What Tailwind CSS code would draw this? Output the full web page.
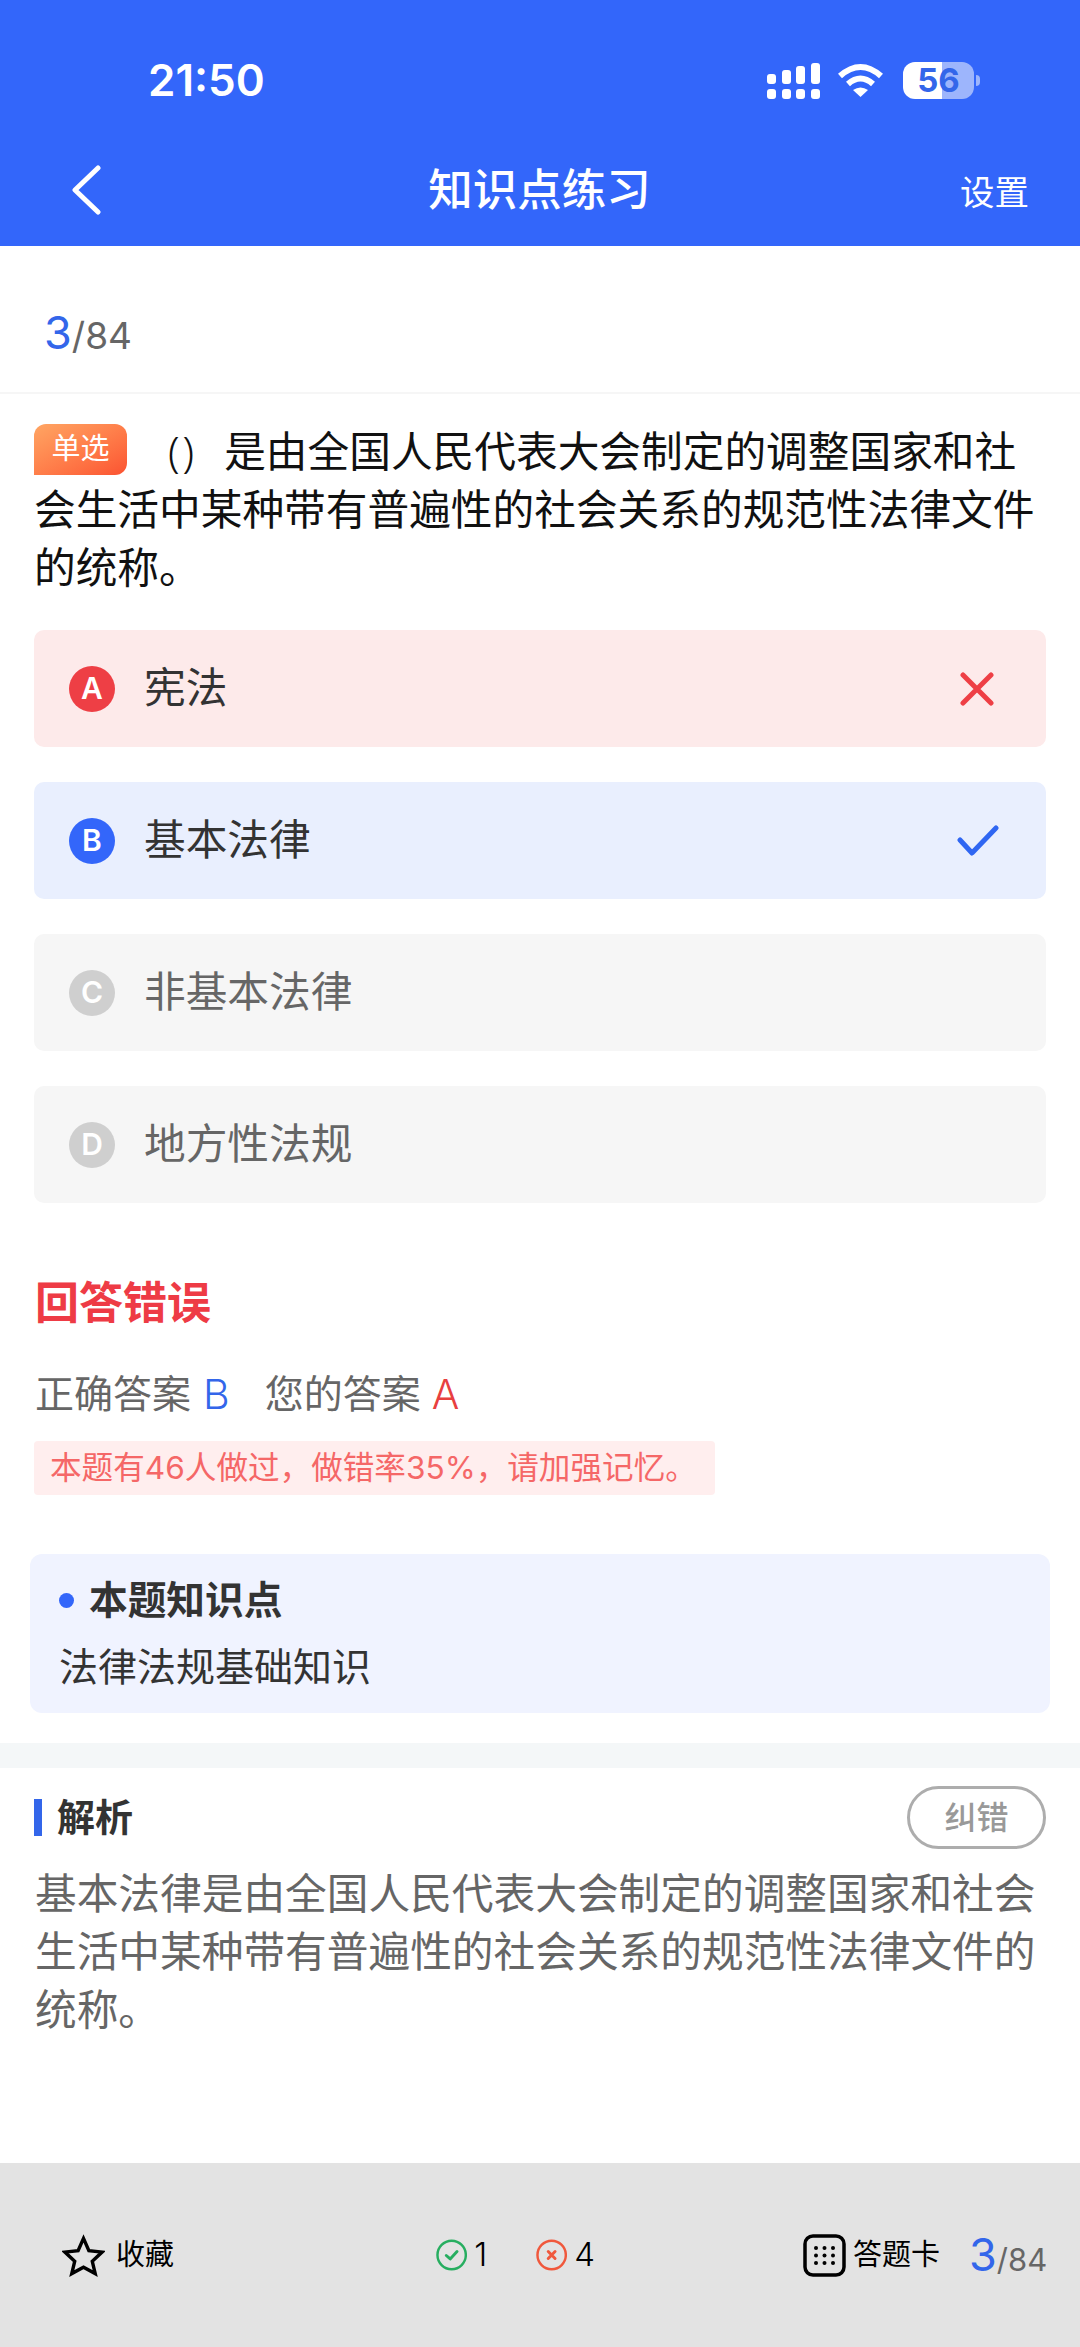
<!DOCTYPE html>
<html lang="zh-CN">
<head>
    <meta charset="UTF-8">
    <title>知识点练习</title>
    <script src="https://cdn.jsdelivr.net/npm/@tailwindcss/browser@4"></script>
</head>
<body class="m-0 bg-white font-['Inter','Noto_Sans_CJK_SC',sans-serif]">
<div class="flex flex-col w-[1080px] h-[2347px] overflow-hidden">

    <!-- header -->
    <div class="h-[246px] bg-[#3366fa] text-white">
        <div class="flex items-center h-[160px] pl-[148px] pr-[100px]">
            <span class="text-[44px] font-semibold leading-none">21:50</span>
            <div class="flex items-center ml-auto">
                <svg width="54" height="37" viewBox="0 0 54 37" fill="#fff">
                    <rect x="0" y="12" width="9" height="10" rx="3"/>
                    <rect x="15" y="8" width="9" height="14" rx="3"/>
                    <rect x="29" y="4" width="9" height="18" rx="3"/>
                    <rect x="44" y="1" width="9" height="21" rx="3"/>
                    <rect x="0" y="27" width="9" height="10" rx="3"/>
                    <rect x="15" y="27" width="9" height="10" rx="3"/>
                    <rect x="29" y="27" width="9" height="10" rx="3"/>
                    <rect x="44" y="27" width="9" height="10" rx="3"/>
                </svg>
                <svg class="ml-[16px]" width="47" height="34" viewBox="0 0 47 34" fill="none" stroke="#fff" stroke-width="6">
                    <path d="M3 13Q23.500 -5 44 13"/>
                    <path d="M11 21Q23.500 10 36 21"/>
                    <path d="M16 27Q23.500 22 31 27L23.500 34Z" fill="#fff" stroke="none"/>
                </svg>
                <div class="flex items-center justify-center ml-[19px] w-[71px] h-[37px] rounded-[12px] bg-[linear-gradient(90deg,#fff_55%,#9db5fc_55%)] text-[33px] font-bold leading-none text-[#3366ea]">56</div>
                <div class="ml-[2px] w-[4px] h-[11px] rounded-r-full bg-[#9db5fc]"></div>
            </div>
        </div>
        <div class="flex items-center h-[60px] pl-[70px] pr-[51px]">
            <div class="flex-1">
                <svg width="32" height="50" viewBox="0 0 32 50" fill="none" stroke="#fff" stroke-width="5" stroke-linecap="round" stroke-linejoin="round">
                    <path d="M28 3L5 25L28 47"/>
                </svg>
            </div>
            <span class="mr-[20px] text-[44.500px] font-medium leading-none">知识点练习</span>
            <div class="flex-1 text-right text-[34.500px] leading-none pt-[6px]">设置</div>
        </div>
    </div>

    <!-- progress -->
    <div class="flex items-baseline h-[148px] pl-[44px] pt-[62px] border-b-2 border-[#f6f6f6] text-[#666] text-[37px] leading-[50px]">
        <span class="text-[#3366ea] text-[45px]">3</span><span>/84</span>
    </div>

    <!-- question -->
    <div class="px-[34px] pt-[28px] text-[41.700px] leading-[58px] text-[#111]">
        <span class="inline-block w-[93px] h-[51px] mt-[2px] mr-[41px] align-top rounded-t-[12px] rounded-br-[12px] bg-linear-to-br from-[#ffa563] to-[#fb5231] text-white text-[29px] leading-[50px] text-center">单选</span><span class="font-['Noto_Sans',sans-serif] font-light tracking-[3px]">()</span><span class="ml-[27px]">是由全国人民代表大会制定的调整国家和社</span>会生活中某种带有普遍性的社会关系的规范性法律文件的统称。
    </div>

    <!-- options -->
    <div class="flex flex-col gap-[35px] mx-[34px] mt-[33px]">
        <div class="flex items-center h-[117px] pl-[35px] pr-[52px] rounded-[10px] bg-[#fdeaea] text-[#333] text-[41.700px]">
            <span class="flex items-center justify-center w-[46px] h-[46px] mr-[29px] rounded-full bg-[#ee3f45] text-white text-[30px] font-semibold">A</span>
            <span>宪法</span>
            <svg class="ml-auto" width="34" height="34" viewBox="0 0 34 34" fill="none" stroke="#ee3f45" stroke-width="5" stroke-linecap="round">
                <path d="M3 3L31 31M31 3L3 31"/>
            </svg>
        </div>
        <div class="flex items-center h-[117px] pl-[35px] pr-[47px] rounded-[10px] bg-[#e9effe] text-[#333] text-[41.700px]">
            <span class="flex items-center justify-center w-[46px] h-[46px] mr-[29px] rounded-full bg-[#3366fa] text-white text-[30px] font-semibold">B</span>
            <span>基本法律</span>
            <svg class="ml-auto" width="42" height="31" viewBox="0 0 42 31" fill="none" stroke="#2f66f2" stroke-width="5" stroke-linecap="round" stroke-linejoin="round">
                <path d="M3 15L15 28L39 3"/>
            </svg>
        </div>
        <div class="flex items-center h-[117px] pl-[35px] pr-[47px] rounded-[10px] bg-[#f6f6f6] text-[#666] text-[41.700px]">
            <span class="flex items-center justify-center w-[46px] h-[46px] mr-[29px] rounded-full bg-[#cfcfcf] text-white text-[30px] font-semibold">C</span>
            <span>非基本法律</span>
        </div>
        <div class="flex items-center h-[117px] pl-[35px] pr-[47px] rounded-[10px] bg-[#f6f6f6] text-[#666] text-[41.700px]">
            <span class="flex items-center justify-center w-[46px] h-[46px] mr-[29px] rounded-full bg-[#cfcfcf] text-white text-[30px] font-semibold">D</span>
            <span>地方性法规</span>
        </div>
    </div>

    <!-- result -->
    <div class="mx-[35px] mt-[70px] h-[60px] text-[44px] leading-[60px] font-bold text-[#ee3b45]">回答错误</div>
    <div class="flex mx-[35px] mt-[36px] h-[50px] text-[39px] leading-[50px] text-[#666]">
        <span>正确答案</span><span class="ml-[12px] text-[41px] font-light text-[#3366ea]">B</span>
        <span class="ml-[35px]">您的答案</span><span class="ml-[11px] text-[41px] font-light text-[#e8403f]">A</span>
    </div>
    <div class="w-[681px] h-[54px] mx-[34px] mt-[22px] pl-[16px] rounded-[4px] bg-[#ffeeee] text-[31.600px] leading-[54px] text-[#f56767]">本题有46人做过，做错率35%，请加强记忆。</div>

    <!-- knowledge point -->
    <div class="h-[159px] mx-[30px] mt-[59px] pl-[29px] pt-[21px] rounded-[12px] bg-[#f0f3ff] text-[#333]">
        <div class="flex items-center h-[50px] text-[38.700px] font-bold">
            <span class="w-[15px] h-[15px] mr-[15px] rounded-full bg-[#3366fa]"></span>本题知识点
        </div>
        <div class="mt-[17px] h-[50px] text-[39px] leading-[50px]">法律法规基础知识</div>
    </div>

    <div class="h-[25px] mt-[30px] bg-[#f4f7f8]"></div>

    <!-- analysis -->
    <div class="flex items-center h-[63px] mx-[34px] mt-[18px]">
        <span class="w-[8px] h-[37px] mr-[15px] bg-[#3366ea]"></span>
        <span class="text-[38px] font-bold text-[#333]">解析</span>
        <span class="flex items-center justify-center ml-auto w-[139px] h-[63px] rounded-full border-[3px] border-[#adadad] text-[32px] font-medium text-[#999]">纠错</span>
    </div>
    <div class="mx-[35px] mt-[16px] text-[41.700px] leading-[58px] text-[#666]">基本法律是由全国人民代表大会制定的调整国家和社会生活中某种带有普遍性的社会关系的规范性法律文件的统称。</div>

    <!-- bottom bar -->
    <div class="flex items-center h-[184px] mt-auto pl-[62px] bg-[#e3e3e3] text-black">
        <div class="flex items-center w-[112px]">
            <svg width="44" height="43" viewBox="0 0 44 43" fill="none" stroke="#000" stroke-width="3.500">
                <path d="M22 4L27.500 16.500L41 18L31 27.500L34 40L22 33.500L10 40L13 27.500L3 18L16.500 16.500Z"/>
            </svg>
            <span class="ml-[11px] text-[29px] whitespace-nowrap">收藏</span>
        </div>
        <div class="flex items-center ml-[262px] w-[159px]">
            <svg width="32" height="32" viewBox="0 0 32 32" fill="none" stroke="#27ae60" stroke-width="2.500" stroke-linecap="round" stroke-linejoin="round">
                <circle cx="16" cy="16" r="14.500"/>
                <path d="M10.500 16.500L14.500 20L21.500 12.500" stroke-width="3"/>
            </svg>
            <span class="ml-[7px] w-[63px] text-[33px] font-light">1</span>
            <svg width="32" height="32" viewBox="0 0 32 32" fill="none" stroke="#f0583c" stroke-width="2.500" stroke-linecap="round">
                <circle cx="16" cy="16" r="14.500"/>
                <path d="M12.500 12.500L19.500 19.500M19.500 12.500L12.500 19.500" stroke-width="3"/>
            </svg>
            <span class="ml-[7px] text-[33px] font-light">4</span>
        </div>
        <div class="flex items-center ml-[208px]">
            <svg width="43" height="43" viewBox="0 0 43 43" fill="#000">
                <rect x="2" y="2" width="39" height="39" rx="8" fill="none" stroke="#000" stroke-width="3.500"/>
                <circle cx="13" cy="14" r="2"/><circle cx="21.500" cy="14" r="2"/><circle cx="30" cy="14" r="2"/>
                <circle cx="13" cy="21.500" r="2"/><circle cx="21.500" cy="21.500" r="2"/><circle cx="30" cy="21.500" r="2"/>
                <circle cx="13" cy="29" r="2"/><circle cx="21.500" cy="29" r="2"/><circle cx="30" cy="29" r="2"/>
            </svg>
            <span class="ml-[7px] text-[29px] whitespace-nowrap">答题卡</span>
            <div class="flex items-baseline ml-[29px] text-[31px] text-[#666] whitespace-nowrap">
                <span class="text-[45px] text-[#3366ea]">3</span><span>/84</span>
            </div>
        </div>
    </div>
</div>
</body>
</html>
